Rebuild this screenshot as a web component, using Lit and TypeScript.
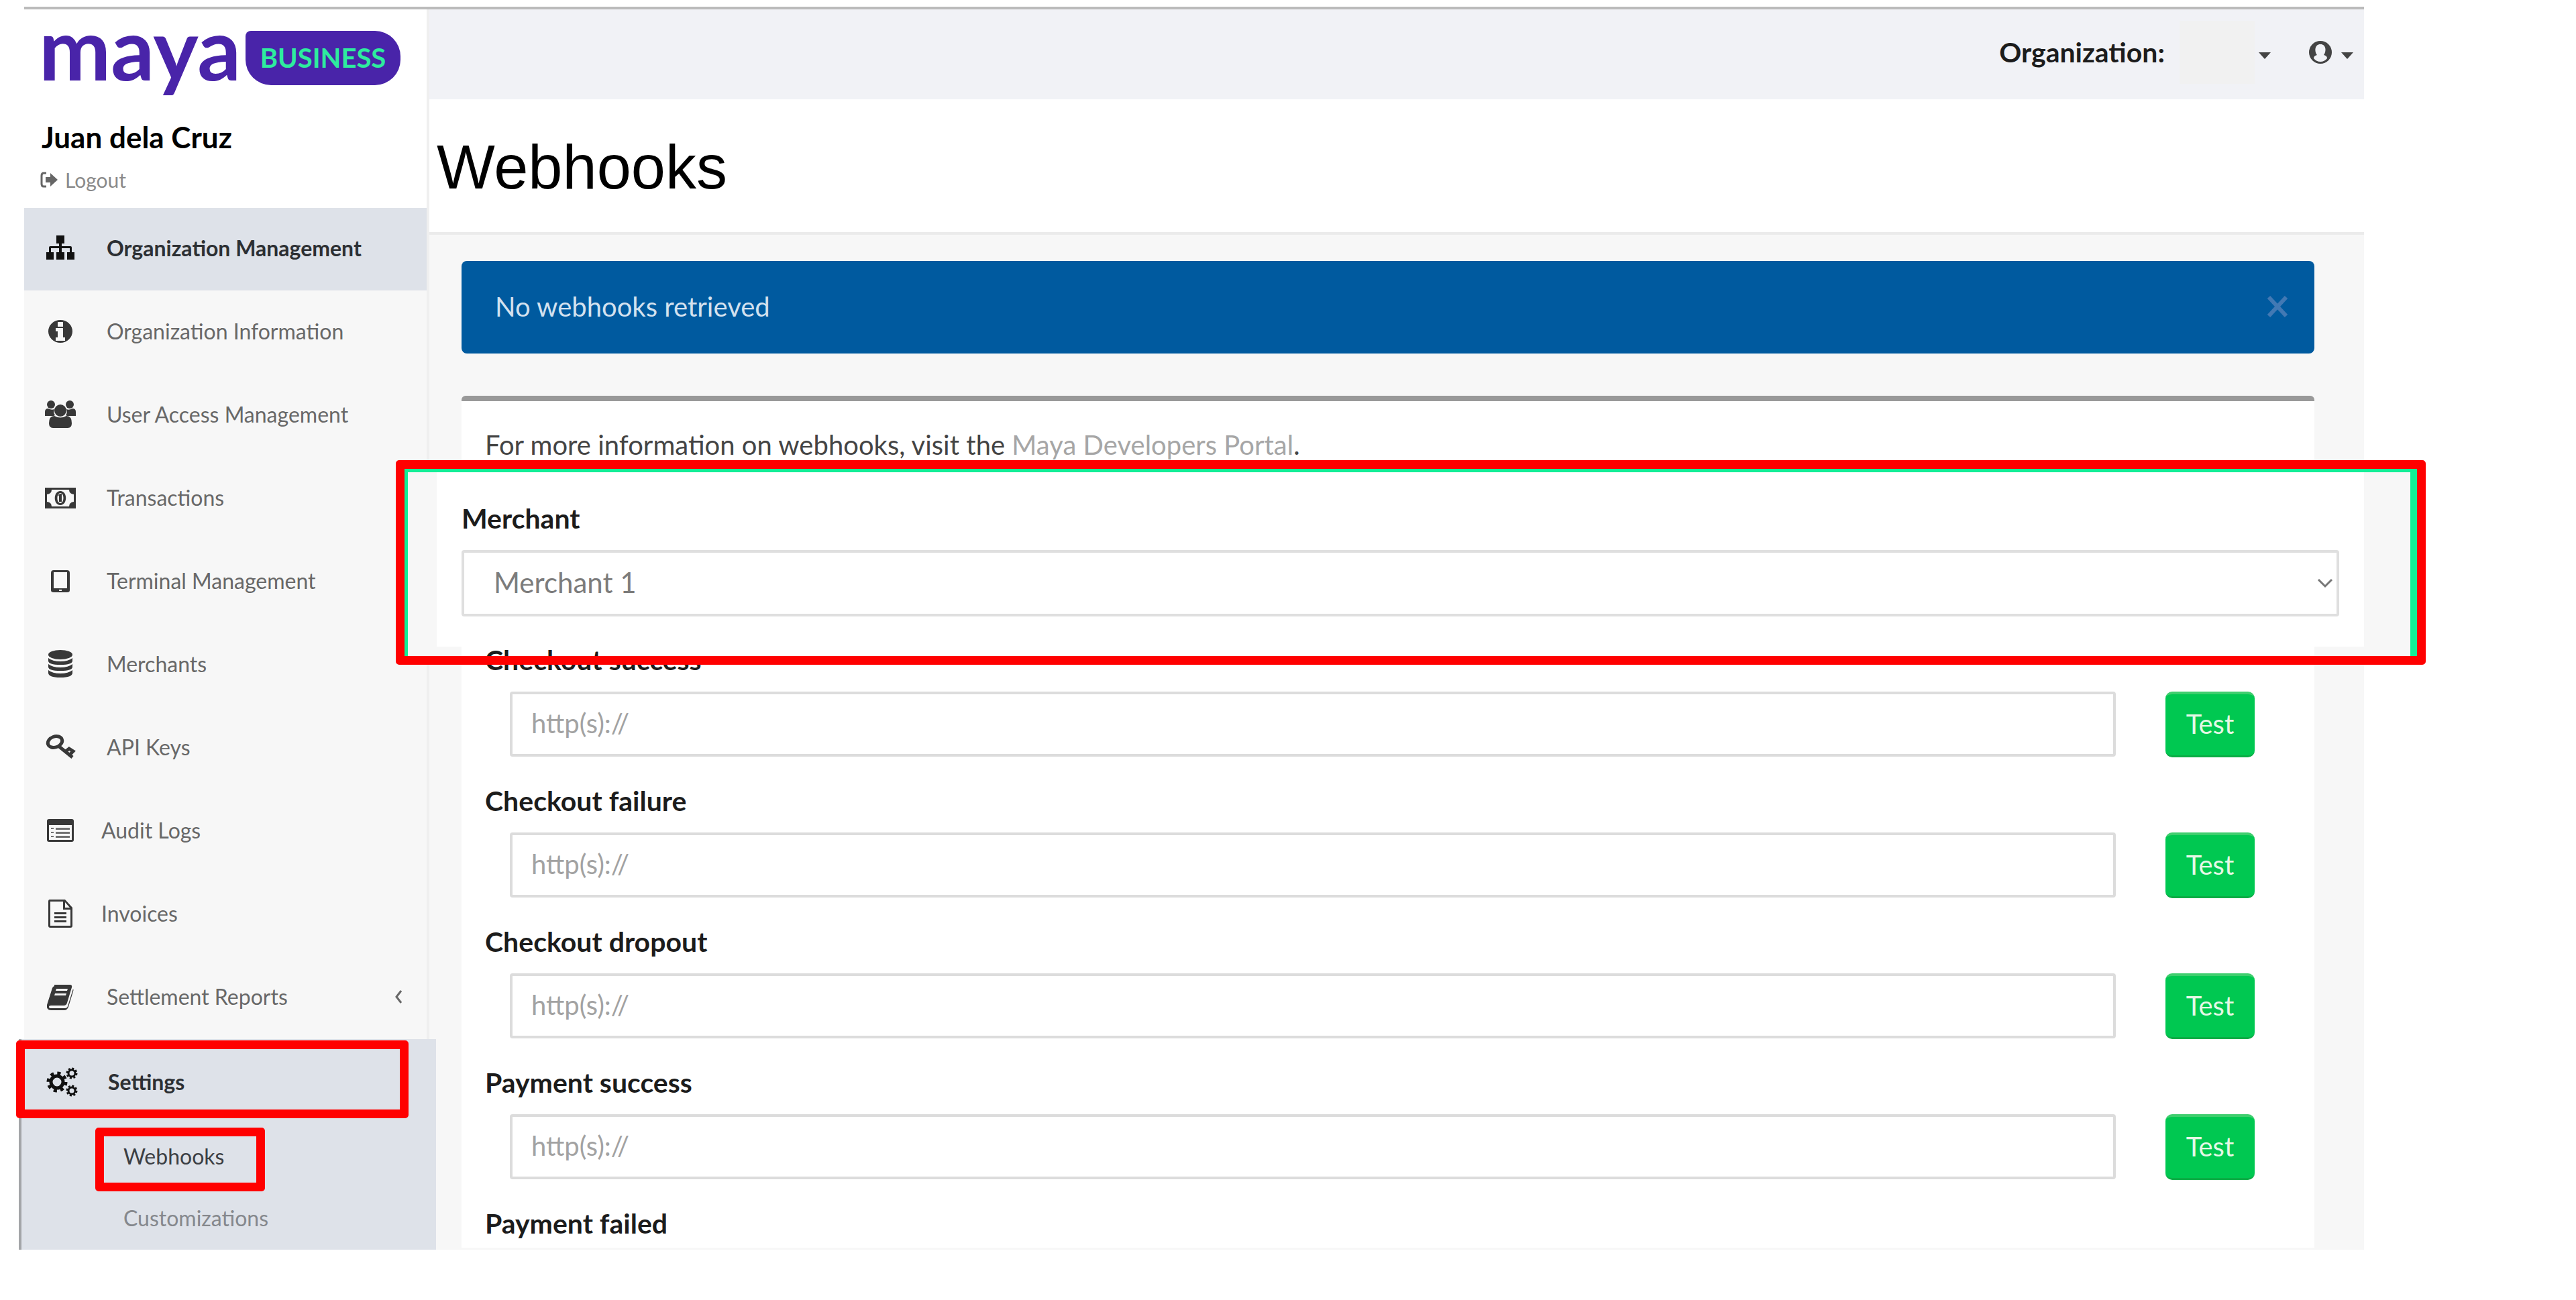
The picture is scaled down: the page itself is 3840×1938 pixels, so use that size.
import { LitElement, html, css, svg, nothing } from "lit";
import { customElement, state } from "lit/decorators.js";

const icons: Record<string, unknown> = {
  sitemap: svg`<path d="M18 5h12v12h-4v4h13q2 0 2 2v7h4v11H34V30h4v-6H26v6h4v11H18V30h4v-6H10v6h4v11H3V30h4v-7q0-2 2-2h13v-4h-4z"/>`,
  info: svg`<path fill-rule="evenodd" d="M24 7a18 17 0 1 0 0 34a18 17 0 1 0 0-34zM20 10h8v7h-8zM17 19h11v14h3v5H17v-5h3v-9h-3z"/>`,
  users: svg`<circle cx="10" cy="9" r="6"/><circle cx="38" cy="9" r="6"/><path d="M1 26v-6q0-5 5-5q5 3 9 1q-2 5 1 9l-2 1zM47 26v-6q0-5-5-5q-5 3-9 1q2 5-1 9l2 1z"/><circle cx="24" cy="18" r="9"/><path d="M7 37q0-11 8-11q9 5 18 0q8 0 8 11q0 7-6 7H13q-6 0-6-7z"/>`,
  money: svg`<path fill-rule="evenodd" d="M1 9h46v31H1zM11 12q0 6-7 7v11q7 1 7 7h26q0-6 7-7V19q-7-1-7-7z"/><path fill-rule="evenodd" d="M24 14c-11 0-11 21 0 21s11-21 0-21zM24 17c6 0 6 15 0 15s-6-15 0-15z"/><path d="M20 20l4-2h2v12h-4v-9z"/>`,
  tablet: svg`<path fill-rule="evenodd" d="M14 8h20q4 0 4 4v26q0 3-4 3H14q-4 0-4-3V12q0-4 4-4zm0 3v24h20V11zm8 26v2h4v-2z"/>`,
  database: svg`<ellipse cx="24" cy="10" rx="18" ry="7"/><path d="M6 15q6 5 18 5t18-5v4q0 6-18 6T6 19zM6 24q6 5 18 5t18-5v4q0 6-18 6T6 28zM6 33q6 5 18 5t18-5v4q0 7-18 7T6 37z"/>`,
  key: svg`<g fill="none" stroke="currentColor" stroke-width="5"><ellipse cx="16" cy="16" rx="11" ry="8" transform="rotate(-20 16 16)"/><path d="M21 22l21 17M31 31l6-5l6 4l-4 4"/></g>`,
  list: svg`<path fill-rule="evenodd" d="M7 7h34q3 0 3 3v28q0 3-3 3H7q-3 0-3-3V10q0-3 3-3zm0 9v22h34V16z"/><path opacity=".7" d="M10 20h4v2h-4zM17 20h21v3H17zM10 26h4v2h-4zM17 26h21v3H17zM10 32h4v2h-4zM17 32h21v3H17z"/>`,
  file: svg`<path fill-rule="evenodd" d="M8 3h23l11 12v27q0 3-3 3H9q-3 0-3-3V6q0-3 2-3zm1 3v36h30V18H28V6zm22 1v8h7z"/><path d="M15 22h18v3H15zM15 28h18v3H15zM15 34h18v3H15z"/>`,
  book: svg`<path fill-rule="evenodd" d="M15 6h23q4 0 3 4l-7 23q-1 4-5 4H10q-3 0-3 2t3 2h21q3 0 4-3l8-26q1 2 0 4l-7 23q-2 5-6 5H10q-7 0-6-8l7-22q1-5 4-6zm3 6l-1 3h17l1-3zm-2 7l-1 3h17l1-3z"/>`,
  cogs: svg`<circle cx="17" cy="24" r="9" fill="none" stroke="currentColor" stroke-width="5"/><circle cx="17" cy="24" r="13" fill="none" stroke="currentColor" stroke-width="5" stroke-dasharray="5 5.2"/><circle cx="39" cy="11" r="5" fill="none" stroke="currentColor" stroke-width="3"/><circle cx="39" cy="11" r="7" fill="none" stroke="currentColor" stroke-width="3" stroke-dasharray="3 2.5"/><circle cx="39" cy="37" r="5" fill="none" stroke="currentColor" stroke-width="3"/><circle cx="39" cy="37" r="7" fill="none" stroke="currentColor" stroke-width="3" stroke-dasharray="3 2.5"/>`,
};

interface MenuItem {
  icon: string;
  label: string;
  near?: boolean;
  more?: boolean;
}

const menu: MenuItem[] = [
  { icon: "info", label: "Organization Information" },
  { icon: "users", label: "User Access Management" },
  { icon: "money", label: "Transactions" },
  { icon: "tablet", label: "Terminal Management" },
  { icon: "database", label: "Merchants" },
  { icon: "key", label: "API Keys" },
  { icon: "list", label: "Audit Logs", near: true },
  { icon: "file", label: "Invoices", near: true },
  { icon: "book", label: "Settlement Reports", more: true },
];

const hooks = ["Checkout success", "Checkout failure", "Checkout dropout", "Payment success"];

const icon = (name: string) => html`<svg class="icon" viewBox="0 0 48 48" aria-hidden="true">${icons[name]}</svg>`;
const caret = html`<svg class="caret" viewBox="0 0 18 10" aria-hidden="true"><path d="M0 0h18l-9 10z" /></svg>`;

@customElement("app-root")
export class AppRoot extends LitElement {
  static styles = css`
    :host {
      display: block;
      font-family: Lato, "Liberation Sans", sans-serif;
      color: #1c1c1c;
      background: #fff;
    }
    * { box-sizing: border-box; }
    a { color: inherit; text-decoration: none; }
    button, input, select { font: inherit; color: inherit; margin: 0; }
    button { border: 0; background: none; padding: 0; }
    svg { display: block; fill: currentColor; flex: none; }
    .page {
      display: flex;
      margin: 10px 316px 0 36px;
      border-top: 4px solid #bbb;
    }
    .sidebar {
      flex: none;
      width: 604px;
      border-right: 4px solid #efefef;
      background: #f7f7f7;
    }
    .brand { background: #fff; height: 296px; padding: 32px 22px 0; }
    .logo { display: flex; height: 134px; align-items: flex-start; color: #4924a9; }
    .word { width: 308px; font-size: 128px; line-height: 50px; font-weight: 700; }
    .badge {
      width: 231px;
      padding: 15px 0 16px;
      border-radius: 8px 38px 38px 38px;
      background: #4924a9;
      color: #2eec9e;
      font-size: 40px;
      line-height: 50px;
      font-weight: 700;
      text-align: center;
    }
    .name { padding-left: 4px; font-size: 44px; line-height: 48px; font-weight: 700; color: #000; }
    .logout {
      display: flex;
      align-items: center;
      gap: 11px;
      margin-top: 22px;
      padding-left: 2px;
      font-size: 30px;
      line-height: 36px;
      color: #8a8a8a;
    }
    .logout svg { width: 26px; height: 24px; color: #666; }
    .item {
      display: flex;
      align-items: center;
      gap: 45px;
      height: 124px;
      padding: 0 36px 3px 30px;
      font-size: 32px;
      line-height: 36px;
      color: #686868;
    }
    .item.near { gap: 37px; }
    .icon { width: 48px; height: 48px; color: #383838; }
    .item .label { flex: 1; }
    .item.active { height: 123px; background: #dee2e9; color: #2c2f33; font-weight: 700; }
    .item.active .icon { color: #111; }
    .less { width: 12px; height: 20px; }
    .group {
      position: relative;
      z-index: 1;
      margin: 0 -14px 0 -8px;
      border-left: 4px solid #a3a5a8;
      background: #dee2e9;
    }
    .group .item { height: 130px; padding: 0 54px 3px 36px; }
    .sub {
      display: flex;
      align-items: center;
      height: 92px;
      padding: 0 0 3px 152px;
      font-size: 32px;
      line-height: 36px;
      color: #85888d;
    }
    .sub.current { color: #3c3f44; }
    .mark { position: absolute; border: 13px solid #f00; border-radius: 5px; pointer-events: none; }
    .mark.settings { inset: 2px 41px auto -8px; height: 116px; }
    .mark.webhooks { left: 110px; top: 132px; width: 253px; height: 95px; }
    .main { flex: 1; min-width: 0; display: flex; flex-direction: column; position: relative; }
    .topbar {
      display: flex;
      justify-content: flex-end;
      align-items: center;
      height: 134px;
      padding: 0 16px 6px 0;
      background: #f1f2f6;
      font-size: 41px;
      line-height: 48px;
      font-weight: 700;
    }
    .org { display: flex; align-items: center; gap: 6px; margin-left: 22px; }
    .org-name { width: 112px; height: 94px; background: #f1f1f1; }
    .caret { width: 18px; height: 10px; margin-top: 10px; color: #444; }
    .account { display: flex; align-items: center; gap: 14px; margin-left: 57px; color: #444; }
    .account .user { width: 34px; height: 34px; }
    .heading {
      height: 202px;
      padding: 53px 0 0 11px;
      border-bottom: 4px solid #ebebeb;
    }
    h1 {
      margin: 0;
      font: 400 92px/96px "Liberation Sans", Arial, sans-serif;
      color: #000;
    }
    .content { flex: 1; padding: 39px 74px 0 48px; background: #f7f7f7; font-size: 40px; line-height: 48px; }
    .alert {
      display: flex;
      align-items: center;
      justify-content: space-between;
      height: 138px;
      padding: 0 38px 2px 50px;
      border-radius: 8px;
      background: #005a9f;
      color: #d3e1ef;
    }
    .close svg { width: 34px; height: 34px; color: #4279b4; }
    .card {
      margin-top: 63px;
      padding: 41px 0 12px 35px;
      border-top: 8px solid #999;
      border-radius: 6px 6px 0 0;
      background: #fff;
    }
    .info { margin: 0 0 273px; color: #444; }
    .info a { color: #a6a6a6; }
    .hook { margin-bottom: 41px; }
    .hook-label { display: block; font-size: 41px; font-weight: 700; }
    .hook-row { display: flex; gap: 74px; margin-top: 23px; padding: 0 89px 0 37px; }
    .url {
      flex: 1;
      min-width: 0;
      height: 97px;
      padding: 0 28px 4px;
      border: 4px solid #dcdcdc;
      border-radius: 4px;
      background: #fff;
    }
    .url::placeholder { color: #a2a2a2; opacity: 1; }
    .test {
      width: 133px;
      height: 98px;
      padding-bottom: 4px;
      border-radius: 10px;
      border-top: 4px solid #3fce6e;
      border-bottom: 3px solid #0aad45;
      background: #00c851;
      color: #e4f8e6;
    }
    .focus {
      position: absolute;
      left: -50px;
      right: -92px;
      top: 672px;
      height: 305px;
      border: 13px solid #f00;
      border-radius: 5px;
      font-size: 41px;
      line-height: 48px;
    }
    .focus-body {
      height: 100%;
      padding: 45px 106px 0 80px;
      border: solid #12ee97;
      border-width: 5px 10px 0 5px;
      background:
        linear-gradient(#f7f7f7, #f7f7f7) left / 43px 100% no-repeat,
        linear-gradient(#f7f7f7, #f7f7f7) right / 69px 100% no-repeat,
        linear-gradient(#fff, #fff) top / 100% calc(100% - 14px) no-repeat;
    }
    .focus-label { display: block; font-weight: 700; }
    .pick { position: relative; margin-top: 23px; }
    .pick select {
      display: block;
      width: 100%;
      height: 99px;
      padding: 0 44px 3px;
      appearance: none;
      border: 4px solid #dfdfdf;
      border-radius: 4px;
      background: #fff;
      font-size: 42px;
      color: #7c7c7c;
    }
    .pick svg { position: absolute; right: 9px; top: 42px; width: 24px; height: 15px; color: #777; }
  `;

  @state() private open = true;

  private renderItem(m: MenuItem) {
    return html`<a href="#" class="item ${m.near ? "near" : ""}">
      ${icon(m.icon)}<span class="label">${m.label}</span>
      ${m.more
        ? html`<svg class="less" viewBox="0 0 12 20" aria-hidden="true"><path fill="none" stroke="currentColor" stroke-width="3" d="M10 1L3 10l7 9" /></svg>`
        : nothing}
    </a>`;
  }

  private renderHook(name: string, i: number) {
    return html`<div class="hook">
      <label class="hook-label" for="hook-${i}">${name}</label>
      <div class="hook-row">
        <input class="url" id="hook-${i}" type="text" placeholder="http(s)://" />
        <button class="test" type="button">Test</button>
      </div>
    </div>`;
  }

  render() {
    return html`<div class="page">
      <nav class="sidebar">
        <div class="brand">
          <div class="logo"><span class="word">maya</span><span class="badge">BUSINESS</span></div>
          <div class="name">Juan dela Cruz</div>
          <a class="logout" href="#">
            <svg viewBox="0 0 26 24" aria-hidden="true">
              <path fill="none" stroke="currentColor" stroke-width="3" d="M9 2H5Q2 2 2 6v12q0 4 3 4h4" />
              <path d="M8 8h7V2l11 10l-11 10v-6H8z" />
            </svg>
            Logout
          </a>
        </div>
        <a href="#" class="item active">${icon("sitemap")}<span class="label">Organization Management</span></a>
        ${menu.map((m) => this.renderItem(m))}
        <div class="group">
          <a href="#" class="item active">${icon("cogs")}<span class="label">Settings</span></a>
          <a href="#" class="sub current">Webhooks</a>
          <a href="#" class="sub">Customizations</a>
          <div class="mark settings"></div>
          <div class="mark webhooks"></div>
        </div>
      </nav>
      <main class="main">
        <header class="topbar">
          <span>Organization:</span>
          <button class="org" type="button" aria-label="Choose organization"><span class="org-name"></span>${caret}</button>
          <button class="account" type="button" aria-label="Account">
            <svg class="user" viewBox="0 0 34 34" aria-hidden="true">
              <path fill-rule="evenodd" d="M17 0a17 17 0 1 0 0 34a17 17 0 1 0 0-34zM17 5c9 0 9 11 5 16q5 1 5 5q-4 5-10 5T7 26q0-4 5-5C8 16 8 5 17 5z" />
            </svg>
            ${caret}
          </button>
        </header>
        <div class="heading"><h1>Webhooks</h1></div>
        <section class="content">
          ${this.open
            ? html`<div class="alert" role="alert">
                <span>No webhooks retrieved</span>
                <button class="close" type="button" aria-label="Close" @click=${() => (this.open = false)}>
                  <svg viewBox="0 0 34 34" aria-hidden="true"><path fill="none" stroke="currentColor" stroke-width="6" d="M4 3l26 28M30 3L4 31" /></svg>
                </button>
              </div>`
            : nothing}
          <div class="card">
            <p class="info">For more information on webhooks, visit the <a href="#">Maya Developers Portal</a>.</p>
            ${hooks.map((h, i) => this.renderHook(h, i))}
            <div class="hook-label">Payment failed</div>
          </div>
        </section>
        <div class="focus">
          <div class="focus-body">
            <label class="focus-label" for="merchant">Merchant</label>
            <div class="pick">
              <select id="merchant"><option>Merchant 1</option></select>
              <svg viewBox="0 0 24 15" aria-hidden="true"><path fill="none" stroke="currentColor" stroke-width="3" d="M2 2l10 10L22 2" /></svg>
            </div>
          </div>
        </div>
      </main>
    </div>`;
  }
}
